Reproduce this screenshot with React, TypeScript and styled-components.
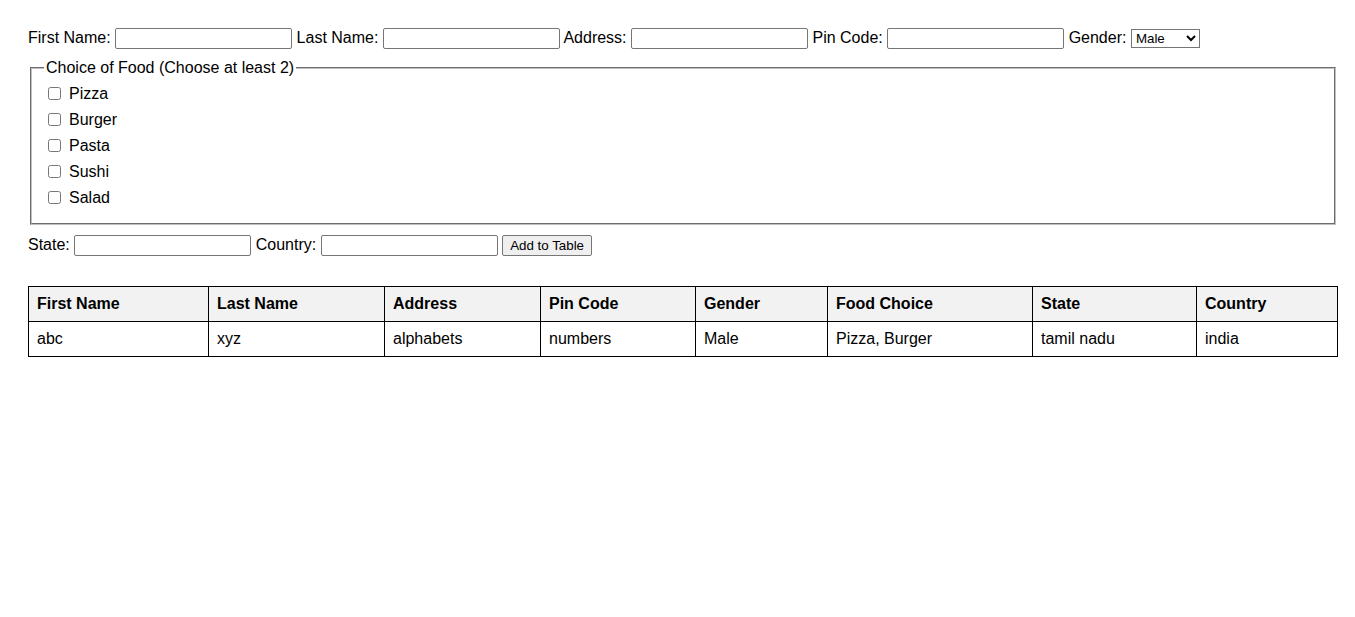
import React from "react";
import styled, { createGlobalStyle } from "styled-components";

const GlobalStyle = createGlobalStyle`
  html, body {
    margin: 0;
    padding: 0;
    background: #ffffff;
  }
  body {
    font-family: "Liberation Sans", Arial, sans-serif;
    font-size: 16px;
    color: #000000;
  }
`;

const Page = styled.div`
  padding: 28px 17px 20px 28px;
`;

const Form = styled.form`
  margin: 0;
`;

const FieldRow = styled.div`
  line-height: normal;
  margin-bottom: 10px;
`;

const Label = styled.label`
  font-size: 16px;
`;

const TextInput = styled.input`
  box-sizing: border-box;
  width: 177px;
  height: 21px;
  padding: 1px 2px;
  border: 1px solid #767676;
  border-radius: 2px;
  font-family: "Liberation Sans", Arial, sans-serif;
  font-size: 13.333px;
  background: #ffffff;
  vertical-align: baseline;
  margin: 0;
`;

const Select = styled.select`
  box-sizing: border-box;
  width: 69px;
  height: 19px;
  border: 1px solid #767676;
  border-radius: 0;
  font-family: "Liberation Sans", Arial, sans-serif;
  font-size: 13.333px;
  background: #ffffff;
  color: #000000;
  margin: 0;
`;

const FoodSet = styled.fieldset`
  margin: 0 2px 10px 2px;
  padding: 6.6px 12px 9px 12px;
  border-width: 2px;
  border-style: groove;
  border-color: rgb(192, 192, 192);
`;

const Legend = styled.legend`
  padding: 0 2px;
  font-size: 16px;
`;

const CheckRow = styled.div`
  margin-bottom: 5px;
  height: 21px;
  display: flex;
  align-items: center;
`;

const CheckBox = styled.input`
  width: 13px;
  height: 13px;
  margin: 2px 3px 4px 4px;
`;

const CheckText = styled.label`
  margin-left: 5px;
`;

const Button = styled.button`
  box-sizing: border-box;
  width: 90px;
  height: 21px;
  padding: 1px 6px;
  border: 1px solid #767676;
  border-radius: 2px;
  background: #efefef;
  font-family: "Liberation Sans", Arial, sans-serif;
  font-size: 13.333px;
  color: #000000;
  margin: 0;
`;

const DataTable = styled.table`
  width: 1309px;
  table-layout: fixed;
  border-collapse: collapse;
  margin-top: 30px;
`;

const HeadCell = styled.th<{ $w: number }>`
  width: ${(p) => p.$w - 17}px;
  border: 1px solid #000000;
  padding: 8px;
  text-align: left;
  font-weight: bold;
  background: #f2f2f2;
`;

const Cell = styled.td`
  border: 1px solid #000000;
  padding: 8px;
  text-align: left;
`;

const columns: [string, number][] = [
  ["First Name", 180],
  ["Last Name", 176],
  ["Address", 156],
  ["Pin Code", 155],
  ["Gender", 132],
  ["Food Choice", 205],
  ["State", 164],
  ["Country", 141],
];

const rows = [
  ["abc", "xyz", "alphabets", "numbers", "Male", "Pizza, Burger", "tamil nadu", "india"],
];

const foods = ["Pizza", "Burger", "Pasta", "Sushi", "Salad"];

export default function App() {
  return (
    <>
      <GlobalStyle />
      <Page>
        <Form onSubmit={(e) => e.preventDefault()}>
          <FieldRow>
            <Label htmlFor="fn">First Name:</Label> <TextInput id="fn" type="text" />{" "}
            <Label htmlFor="ln">Last Name:</Label> <TextInput id="ln" type="text" />{" "}
            <Label htmlFor="ad">Address:</Label> <TextInput id="ad" type="text" />{" "}
            <Label htmlFor="pc">Pin Code:</Label> <TextInput id="pc" type="text" />{" "}
            <Label htmlFor="gd">Gender:</Label>{" "}
            <Select id="gd" defaultValue="Male">
              <option>Male</option>
              <option>Female</option>
              <option>Other</option>
            </Select>
          </FieldRow>
          <FoodSet>
            <Legend>Choice of Food (Choose at least 2)</Legend>
            {foods.map((f) => (
              <CheckRow key={f}>
                <CheckBox type="checkbox" id={"f-" + f} />
                <CheckText htmlFor={"f-" + f}>{f}</CheckText>
              </CheckRow>
            ))}
          </FoodSet>
          <FieldRow>
            <Label htmlFor="st">State:</Label> <TextInput id="st" type="text" />{" "}
            <Label htmlFor="co">Country:</Label> <TextInput id="co" type="text" />{" "}
            <Button type="submit">Add to Table</Button>
          </FieldRow>
        </Form>
        <DataTable>
          <thead>
            <tr>
              {columns.map(([c, w]) => (
                <HeadCell key={c} $w={w}>
                  {c}
                </HeadCell>
              ))}
            </tr>
          </thead>
          <tbody>
            {rows.map((r, i) => (
              <tr key={i}>
                {r.map((v, j) => (
                  <Cell key={j}>{v}</Cell>
                ))}
              </tr>
            ))}
          </tbody>
        </DataTable>
      </Page>
    </>
  );
}
